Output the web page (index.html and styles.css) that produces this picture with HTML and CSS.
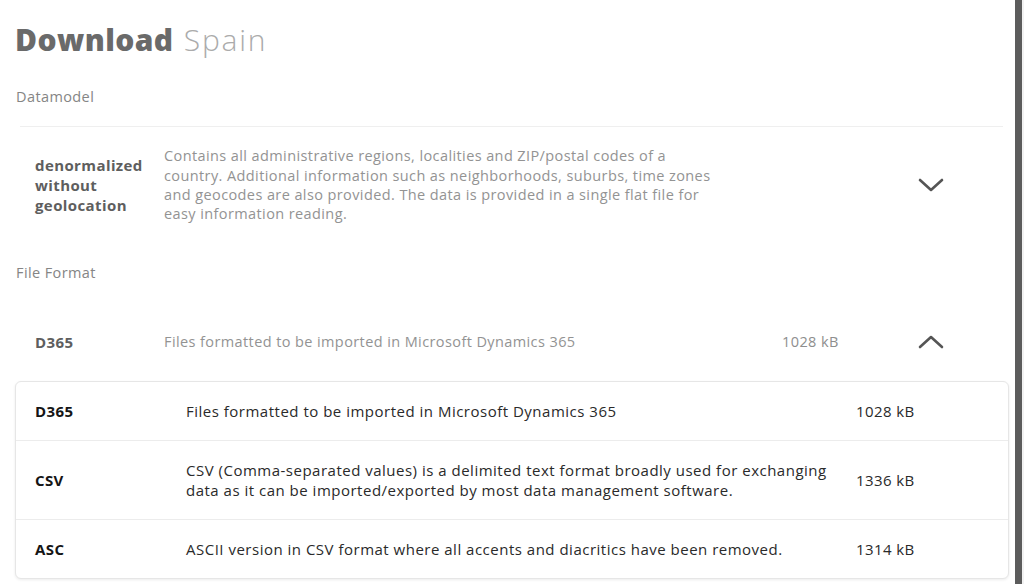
FILE: index.html
```html
<!DOCTYPE html>
<html>
<head>
<meta charset="utf-8">
<link rel="stylesheet" href="styles.css">
</head>
<body>
<div class="screen">
  <main class="panel">
    <h1 class="title"><span class="strong">Download</span> <span class="light">Spain</span></h1>

    <div class="label label-first">Datamodel</div>
    <div class="option-row model-row">
      <div class="opt-code">denormalized without geolocation</div>
      <div class="opt-desc">Contains all administrative regions, localities and ZIP/postal codes of a country. Additional information such as neighborhoods, suburbs, time zones and geocodes are also provided. The data is provided in a single flat file for easy information reading.</div>
      <div class="opt-size"></div>
      <div class="chev">
        <svg width="26" height="16" viewBox="0 0 26 16"><path d="M2 3 L13 13 L24 3" fill="none" stroke="#555" stroke-width="2.6" stroke-linecap="round" stroke-linejoin="round"/></svg>
      </div>
    </div>

    <div class="label label-second">File Format</div>
    <div class="option-row format-row">
      <div class="opt-code">D365</div>
      <div class="opt-desc">Files formatted to be imported in Microsoft Dynamics 365</div>
      <div class="opt-size">1028 kB</div>
      <div class="chev">
        <svg width="26" height="16" viewBox="0 0 26 16"><path d="M2 13 L13 3 L24 13" fill="none" stroke="#555" stroke-width="2.6" stroke-linecap="round" stroke-linejoin="round"/></svg>
      </div>
    </div>

    <div class="card">
      <div class="card-row">
        <div class="c-code">D365</div>
        <div class="c-desc">Files formatted to be imported in Microsoft Dynamics 365</div>
        <div class="c-size">1028 kB</div>
      </div>
      <div class="card-row tall">
        <div class="c-code">CSV</div>
        <div class="c-desc">CSV (Comma-separated values) is a delimited text format broadly used for exchanging data as it can be imported/exported by most data management software.</div>
        <div class="c-size">1336 kB</div>
      </div>
      <div class="card-row">
        <div class="c-code">ASC</div>
        <div class="c-desc">ASCII version in CSV format where all accents and diacritics have been removed.</div>
        <div class="c-size">1314 kB</div>
      </div>
    </div>
  </main>
  <div class="edge"></div>
</div>
</body>
</html>
```

FILE: styles.css
```css
* { box-sizing: border-box; }
html, body { margin: 0; padding: 0; background: #fff; }
body {
  font-family: "Open Sans", "Noto Sans", sans-serif;
  width: 1024px;
  height: 584px;
  overflow: hidden;
  letter-spacing: 0.4px;
}
.screen {
  display: flex;
  height: 584px;
}
.panel {
  width: 1015px;
  padding: 21px 0 0 15px;
}
.edge {
  width: 9px;
  border-left: 7px solid #5c5c5c;
  background: #f2f2f2;
}
.title {
  margin: 0;
  font-size: 30px;
  line-height: 38px;
  font-weight: 400;
  letter-spacing: 0.4px;
}
.strong { font-weight: 800; color: #6a6a6a; }
.light { font-weight: 300; color: #ababab; letter-spacing: 1.8px; margin-left: 2px; }

.label {
  font-size: 14.5px;
  color: #858585;
  padding-left: 1px;
  line-height: 18px;
}
.label-first { margin-top: 29px; padding-bottom: 20px; border-bottom: 1px solid #efefef; margin-left: 5px; padding-left: 0; margin-right: 12px; text-indent: -4px; }
.label-second { margin-top: 17px; }

.option-row {
  display: grid;
  grid-template-columns: 129px 565px 53px 136px 26px;
  align-items: center;
  padding-left: 20px;
}
.model-row { height: 120px; padding-bottom: 4px; }
.format-row { height: 99px; padding-top: 20px; }

.opt-code {
  font-weight: 700;
  font-size: 15px;
  line-height: 20px;
  color: #5e5e5e;
  width: 115px;
}
.opt-desc {
  font-size: 14.5px;
  line-height: 19.4px;
  color: #939393;
}
.opt-size {
  font-size: 14.5px;
  color: #8e8e8e;
  white-space: nowrap;
}
.chev {
  display: flex;
  align-items: center;
}
.format-row .opt-size { grid-column: 4; }
.format-row .chev { grid-column: 5; }
.model-row .opt-size { display: none; }
.model-row .chev { grid-column: 5; }

.card {
  width: 994px;
  border: 1px solid #e6e6e6;
  border-radius: 6px;
  box-shadow: 0 1px 3px rgba(0,0,0,0.08);
  background: #fff;
}
.card-row {
  display: grid;
  grid-template-columns: 151px 660px 1fr;
  align-items: center;
  height: 59px;
  padding-left: 19px;
  border-top: 1px solid #ececec;
}
.card-row:first-child { border-top: none; height: 58px; }
.card-row.tall { height: 79px; }
.c-code {
  font-weight: 700;
  font-size: 15px;
  color: #151515;
}
.c-desc {
  font-size: 15px;
  line-height: 20px;
  color: #2a2a2a;
  padding-right: 10px;
  letter-spacing: 0.5px;
}
.c-size {
  font-size: 15px;
  color: #2a2a2a;
  padding-left: 10px;
}
```
